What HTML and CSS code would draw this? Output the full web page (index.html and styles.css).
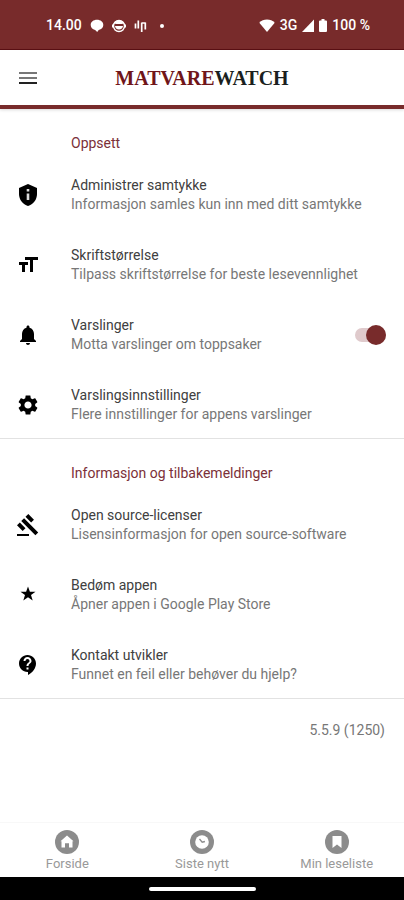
FILE: index.html
```html
<!DOCTYPE html>
<html lang="no">
<head>
<meta charset="utf-8">
<meta name="viewport" content="width=device-width, initial-scale=1">
<title>MatvareWatch</title>
<link rel="stylesheet" href="styles.css">
</head>
<body>
<div class="status">
  <div class="status-left">
    <span class="clock">14.00</span>
    <svg width="14" height="14" viewBox="0 0 14 14"><path fill="#fff" d="M7 .8C3.400.8.7 2.900.7 6c0 2.600 1.800 4.300 4.400 4.900L7.200 13l1.500-2.100c2.800-.5 4.600-2.300 4.600-4.900C13.300 2.900 10.600.8 7 .8z"/></svg>
    <svg width="14" height="14" viewBox="0 0 14 14"><circle cx="7" cy="7" r="5.500" fill="none" stroke="#fff" stroke-width="1.400"/><path fill="#fff" d="M1.800 4.500C3 2.500 5 1.300 7 1.300s4 1.200 5.200 3.200L9.500 5h-5zM3 7h8c0 2-1.800 3.400-4 3.400S3 9 3 7zM0 5.500h2v3H0zM12 5.500h2v3h-2z"/></svg>
    <svg width="14" height="14" viewBox="0 0 14 14"><path fill="none" stroke="#fff" stroke-width="1.700" d="M1.500 4.500v5M4.300 1.500v8M7.700 3.500v9.500M8 4h3.500M11.300 3.500v7"/></svg>
    <span class="dot"></span>
  </div>
  <div class="status-right">
    <svg width="16" height="13" viewBox="0 0 16 13"><path fill="#fff" d="M8 13L.3 3.800C2.300 1.800 5 .6 8 .6s5.700 1.200 7.700 3.200z"/></svg>
    <span class="network">3G</span>
    <svg width="12" height="13" viewBox="0 0 12 13"><path fill="#fff" d="M12 .5V13H0z"/></svg>
    <svg class="battery" width="8" height="13" viewBox="0 0 8 13"><path fill="#fff" d="M2.500 0h3v1.500H7q1 0 1 1V12q0 1-1 1H1q-1 0-1-1V2.500q0-1 1-1h1.500z"/></svg>
    <span>100 %</span>
  </div>
</div>
<header class="topbar">
  <button class="menu" aria-label="Meny"><span></span><span></span><span></span></button>
  <h1 class="logo"><span>MATVARE</span>WATCH</h1>
</header>
<main>
  <section class="group">
    <h2>Oppsett</h2>
    <button class="row">
      <svg class="icon" viewBox="0 0 24 24"><path d="M12 1L3 5v6c0 5.550 3.840 10.740 9 12 5.160-1.260 9-6.450 9-12V5l-9-4z"/><path fill="#ddd" d="M10.700 6h2.600v2.600h-2.600zM10.700 10.400h2.600V17h-2.600z"/></svg>
      <span class="text"><span class="title">Administrer samtykke</span><span class="sub">Informasjon samles kun inn med ditt samtykke</span></span>
    </button>
    <button class="row">
      <svg class="icon" viewBox="0 0 24 24"><path d="M9 4v3h5v12h3V7h5V4H9zm-6 8h3v7h3v-7h3V9H3v3z"/></svg>
      <span class="text"><span class="title">Skriftstørrelse</span><span class="sub">Tilpass skriftstørrelse for beste lesevennlighet</span></span>
    </button>
    <label class="row">
      <svg class="icon" viewBox="0 0 24 24"><path d="M12 22c1.100 0 2-.9 2-2h-4c0 1.100.9 2 2 2zm6-6v-5c0-3.070-1.640-5.640-4.500-6.320V4c0-.83-.67-1.500-1.500-1.500s-1.500.67-1.500 1.500v.68C7.630 5.360 6 7.920 6 11v5l-2 2v1h16v-1l-2-2z"/></svg>
      <span class="text"><span class="title">Varslinger</span><span class="sub">Motta varslinger om toppsaker</span></span>
      <input class="switch" type="checkbox" checked>
    </label>
    <button class="row">
      <svg class="icon" viewBox="0 0 24 24"><path d="M19.140 12.940c.04-.3.06-.61.06-.94 0-.32-.02-.64-.07-.94l2.030-1.580c.18-.14.23-.41.12-.61l-1.920-3.320c-.12-.22-.37-.29-.59-.22l-2.390.96c-.5-.38-1.030-.7-1.620-.94l-.36-2.540c-.04-.24-.24-.41-.48-.41h-3.840c-.24 0-.43.17-.47.41l-.36 2.540c-.59.24-1.130.57-1.620.94l-2.390-.96c-.22-.08-.47 0-.59.22L2.740 8.870c-.12.21-.08.47.12.61l2.030 1.580c-.05.3-.09.63-.09.94s.02.64.07.94l-2.030 1.580c-.18.14-.23.41-.12.61l1.920 3.320c.12.22.37.29.59.22l2.390-.96c.5.38 1.030.7 1.620.94l.36 2.540c.05.24.24.41.48.41h3.840c.24 0 .44-.17.47-.41l.36-2.540c.59-.24 1.130-.56 1.620-.94l2.390.96c.22.08.47 0 .59-.22l1.920-3.320c.12-.22.07-.47-.12-.61l-2.010-1.580zM12 15.600c-1.980 0-3.600-1.620-3.600-3.600s1.620-3.600 3.600-3.600 3.600 1.620 3.600 3.600-1.620 3.600-3.600 3.600z"/></svg>
      <span class="text"><span class="title">Varslingsinnstillinger</span><span class="sub">Flere innstillinger for appens varslinger</span></span>
    </button>
  </section>
  <section class="group">
    <h2>Informasjon og tilbakemeldinger</h2>
    <button class="row">
      <svg class="icon" viewBox="0 0 24 24"><path d="M1 21h12v2H1zM5.245 8.070l2.830-2.827 14.140 14.142-2.828 2.828zM12.317 1l5.657 5.656-2.830 2.830-5.654-5.660zM3.825 9.485l5.657 5.657-2.828 2.828-5.657-5.657z"/></svg>
      <span class="text"><span class="title">Open source-licenser</span><span class="sub">Lisensinformasjon for open source-software</span></span>
    </button>
    <button class="row">
      <svg class="icon" viewBox="0 0 24 24"><path d="M12 3.500l1.900 5.200H19.500l-4.500 3.400 1.700 5.500-4.700-3.300-4.700 3.300 1.700-5.500-4.500-3.400h5.600z"/></svg>
      <span class="text"><span class="title">Bedøm appen</span><span class="sub">Åpner appen i Google Play Store</span></span>
    </button>
    <button class="row">
      <svg class="icon" viewBox="0 0 24 24"><path d="M11.500 2C6.810 2 3 5.810 3 10.500S6.810 19 11.500 19h.5v3c4.860-2.340 8-7 8-11.500C20 5.810 16.190 2 11.500 2zm1 14.500h-2v-2h2v2zm0-3.500h-2c0-3.250 3-3 3-5 0-1.100-.9-2-2-2s-2 .9-2 2h-2c0-2.210 1.790-4 4-4s4 1.790 4 4c0 2.500-3 2.750-3 5z"/></svg>
      <span class="text"><span class="title">Kontakt utvikler</span><span class="sub">Funnet en feil eller behøver du hjelp?</span></span>
    </button>
  </section>
  <p class="version">5.5.9 (1250)</p>
</main>
<nav class="tabs">
  <a href="#forside"><svg viewBox="0 0 24 24"><circle cx="12" cy="12" r="12" fill="#8c8c8c"/><path fill="#fff" d="M12 5.500l6.500 5.800h-1v6.200h-3.500v-4.300h-4v4.300H6.500v-6.200h-1z"/></svg>Forside</a>
  <a href="#siste"><svg viewBox="0 0 24 24"><circle cx="12" cy="12" r="12" fill="#8c8c8c"/><circle cx="12" cy="12" r="6.800" fill="#fff"/><path fill="none" stroke="#8c8c8c" stroke-width="1.300" d="M9.500 9l2.700 3.200 2.700-.7"/></svg>Siste nytt</a>
  <a href="#leseliste"><svg viewBox="0 0 24 24"><circle cx="12" cy="12" r="12" fill="#8c8c8c"/><path fill="#fff" d="M7.500 6h9v12L12 14.500 7.500 18z"/></svg>Min leseliste</a>
</nav>
<div class="system"><span></span></div>
</body>
</html>
```
FILE: styles.css
```css
* { box-sizing: border-box; }
body {
  margin: 0;
  min-height: 100vh;
  display: flex;
  flex-direction: column;
  background: #fff;
  font-family: Roboto, "Liberation Sans", sans-serif;
  font-size: 14px;
  line-height: 19px;
}
button { font: inherit; border: 0; background: none; cursor: pointer; }
.status {
  height: 50px;
  padding: 2px 34px 0 46px;
  display: flex;
  align-items: center;
  justify-content: space-between;
  background: #782b2b;
  border-bottom: 1px solid #5c1014;
  color: #fff;
  font-weight: 500;
}
.status-left { display: flex; align-items: center; gap: 8px; }
.status-right { display: flex; align-items: center; gap: 5px; }
.dot { width: 4px; height: 4px; margin-left: 4px; border-radius: 50%; background: #fff; }
.topbar {
  height: 59px;
  display: grid;
  grid-template-columns: 1fr auto 1fr;
  align-items: center;
  padding: 0 18px;
  border-bottom: 4px solid #782b2b;
  box-shadow: 0 1px 3px rgba(0, 0, 0, .15);
}
.menu { width: 20px; padding: 0 1px; display: grid; gap: 3px; }
.menu span { height: 2px; background: #777; }
.menu span:last-child { background: #222; }
.logo {
  margin: 0;
  font: 700 20px/24px "Liberation Serif", serif;
  color: #1b1f20;
}
.logo span { color: #701519; }
main { flex: 1; }
.group { border-bottom: 1px solid #e2e2e2; }
h2 {
  margin: 0;
  padding: 24px 16px 5px 71px;
  font-size: 14px;
  font-weight: 400;
  line-height: 20px;
  color: #7b3038;
}
.row {
  width: 100%;
  display: flex;
  align-items: center;
  padding: 18px 18px 14px 16px;
  text-align: left;
  cursor: pointer;
}
.icon { width: 24px; height: 24px; margin-right: 31px; flex: none; }
.text { flex: 1; }
.title, .sub { display: block; }
.title { color: #404040; }
.sub { color: #777; }
.switch {
  appearance: none;
  display: grid;
  align-items: center;
  width: 31px;
  height: 20px;
  margin: 0;
  cursor: pointer;
}
.switch::before, .switch::after { content: ""; grid-area: 1 / 1; }
.switch::before { height: 14px; border-radius: 7px; background: #dfcacc; }
.switch::after { width: 20px; height: 20px; border-radius: 50%; background: #999; }
.switch:checked::after { justify-self: end; background: #782b2b; }
.version { margin: 0; padding: 22px 19px; text-align: right; color: #777; }
.tabs {
  height: 55px;
  padding-top: 7px;
  display: grid;
  grid-template-columns: repeat(3, 1fr);
  border-top: 1px solid #f8f8f8;
}
.tabs a {
  display: flex;
  flex-direction: column;
  align-items: center;
  gap: 2px;
  font-size: 13px;
  line-height: 15px;
  color: #999;
  text-decoration: none;
}
.tabs svg { width: 24px; height: 24px; }
.system { height: 23px; display: flex; align-items: center; justify-content: center; background: #000; }
.system span { width: 107px; height: 4px; border-radius: 2px; background: #fff; }
```
